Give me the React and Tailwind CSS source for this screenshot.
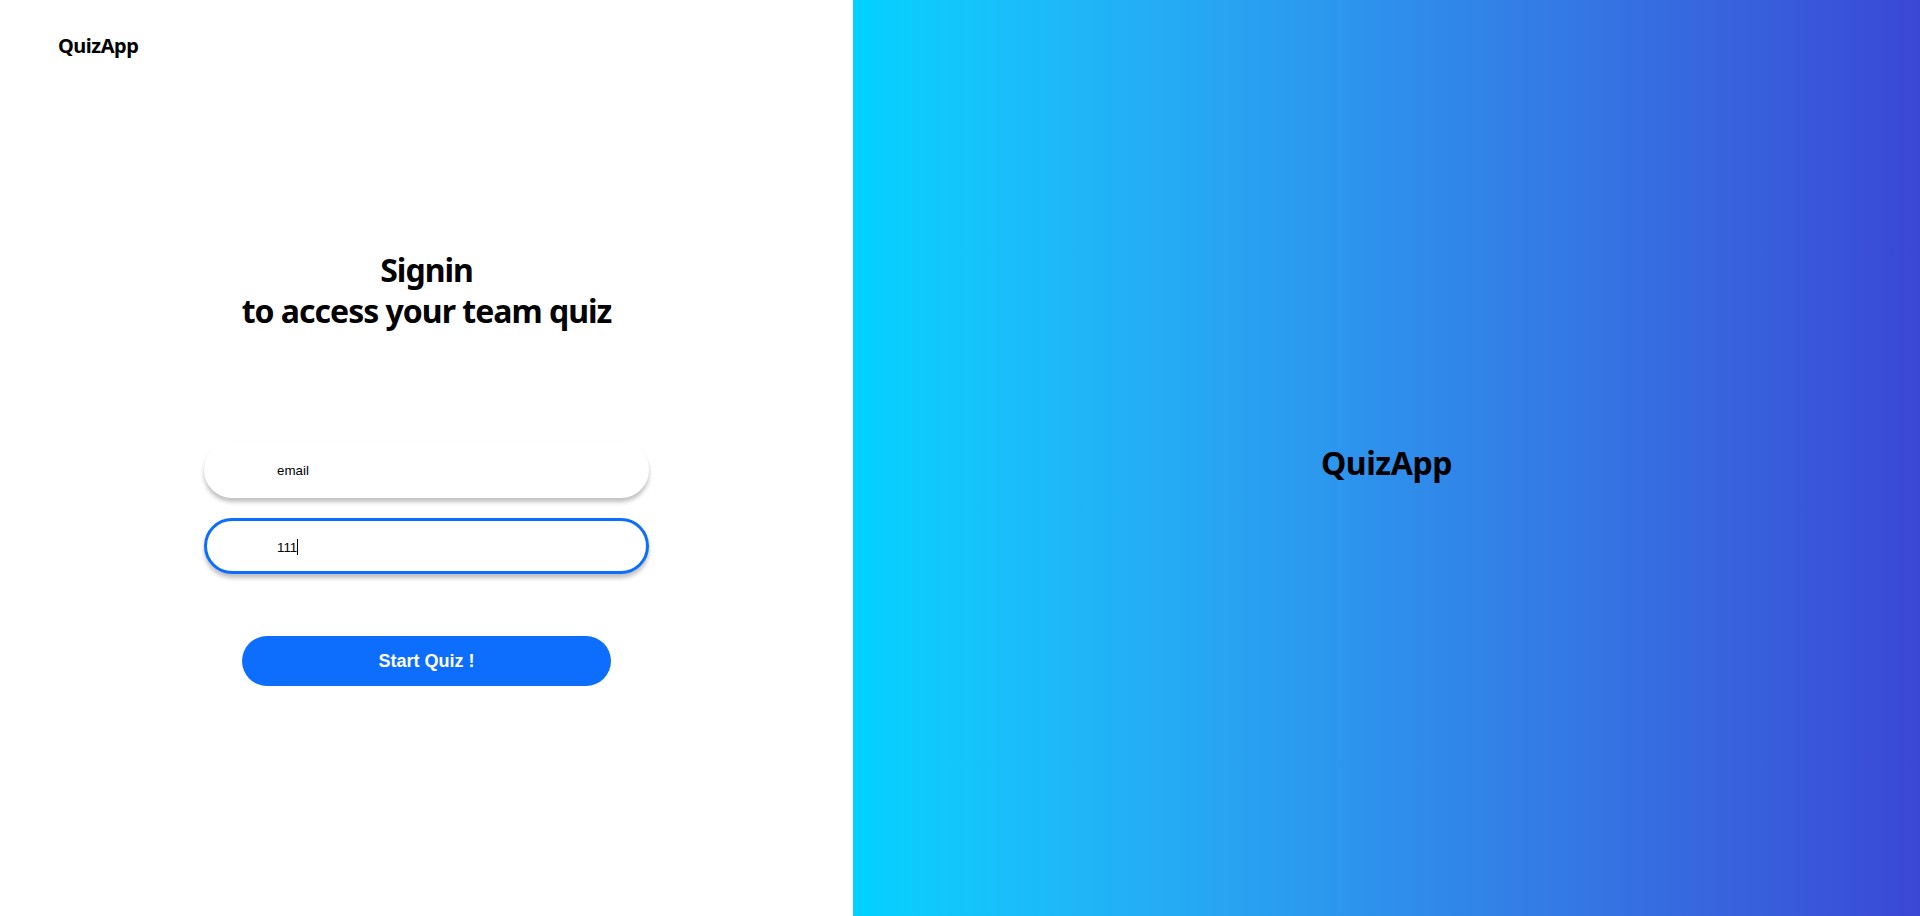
import React from 'react';

const App = () => {
  return (
    <div className="flex w-full h-[916px] bg-white font-['Noto_Sans',sans-serif] text-black">
      {/* Formulaire */}
      <div className="w-[853px] h-full flex flex-col">
        <div className="pt-[32px] pl-[58px] text-[20px] font-bold leading-[27px] tracking-[-0.5px]">QuizApp</div>

        <h1 className="mt-[190px] text-center text-[32px] font-bold leading-[41px] tracking-[-1px]">
          Signin
          <br />
          to access your team quiz
        </h1>

        <form className="mt-[111px] flex flex-col items-center" onSubmit={(e) => e.preventDefault()}>
          <input
            type="text"
            defaultValue="email"
            className="w-[445px] h-[56px] rounded-full bg-white border-[3px] border-white pl-[70px] font-['Liberation_Sans',Arial,sans-serif] text-[13.33px] text-black outline-none shadow-[0_4px_4px_rgba(0,0,0,0.25)]"
          />
          <div className="relative mt-[20px]">
            <input
              type="text"
              defaultValue="111"
              className="w-[445px] h-[56px] pt-[2px] rounded-full bg-white border-[3px] border-[#0d6efd] pl-[70px] font-['Liberation_Sans',Arial,sans-serif] text-[13.33px] text-black outline-none shadow-[0_4px_4px_rgba(0,0,0,0.25)]"
            />
            {/* curseur */}
            <span className="absolute left-[93px] top-[21px] w-px h-[16px] bg-black" />
          </div>

          <button
            type="submit"
            className="mt-[62px] w-[369px] h-[50px] rounded-full bg-[#0d6efd] text-white font-['Liberation_Sans',Arial,sans-serif] text-[18px] font-bold"
          >
            Start Quiz !
          </button>
        </form>
      </div>

      {/* Panneau dégradé */}
      <div className="flex-1 h-full flex items-center justify-center bg-gradient-to-r from-[#00d2ff] to-[#3a47d5]">
        <span className="mt-[10px] text-[32px] font-bold leading-[44px] tracking-[-0.4px]">QuizApp</span>
      </div>
    </div>
  );
};

export default App;
